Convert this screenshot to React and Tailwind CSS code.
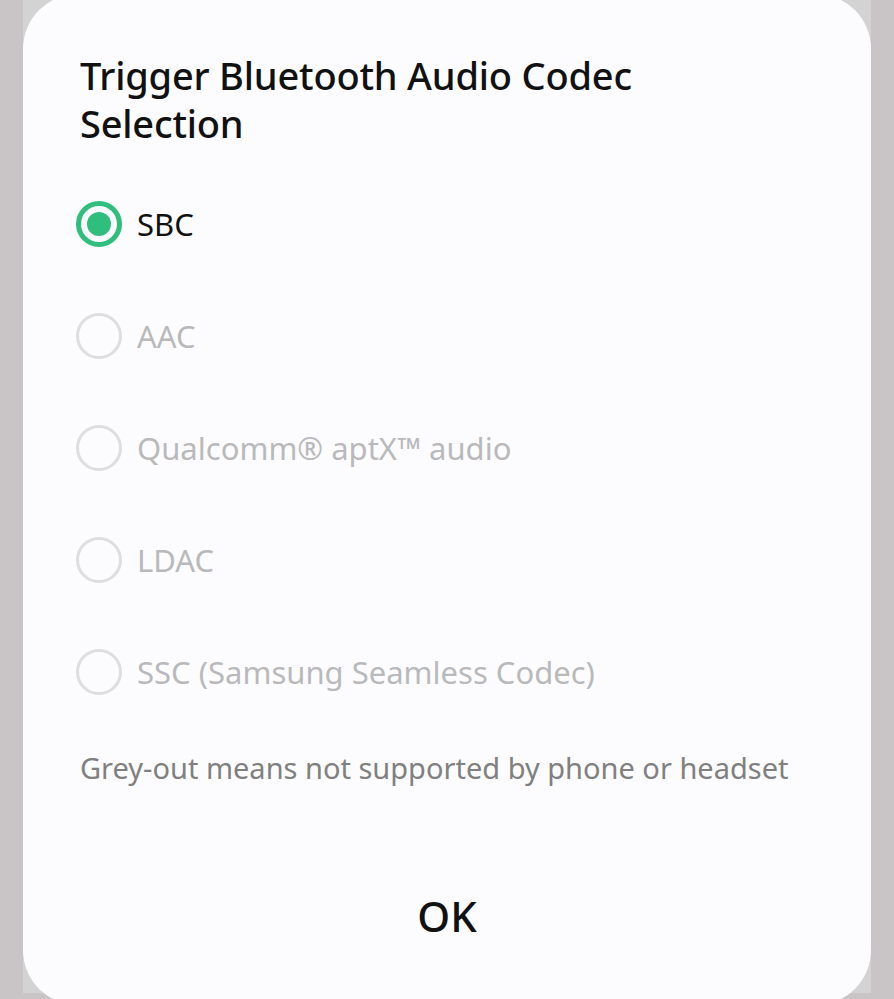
import React from "react";

const options = [
  { label: "SBC", selected: true, enabled: true },
  { label: "AAC", enabled: false },
  { label: "Qualcomm® aptX™ audio", enabled: false },
  { label: "LDAC", enabled: false },
  { label: "SSC (Samsung Seamless Codec)", enabled: false },
];

function Radio({ selected }) {
  if (selected) {
    return (
      <div className="w-[46px] h-[46px] rounded-full border-[5px] border-[#2fbe7c] flex items-center justify-center shrink-0">
        <div className="w-[24px] h-[24px] rounded-full bg-[#2fbe7c]" />
      </div>
    );
  }
  return (
    <div className="w-[46px] h-[46px] rounded-full border-[3px] border-[#dedddf] shrink-0" />
  );
}

export default function App() {
  return (
    <div
      className="w-[894px] h-[999px] bg-[#c9c4c5] overflow-hidden px-[23px]"
      style={{ fontFamily: '"Noto Sans", "Open Sans", sans-serif' }}
    >
      <div className="h-full bg-[#d3d3d3]">
        <div className="-mt-[6px] h-[1011px] rounded-[55px] bg-[#fcfcfe] flex flex-col pl-[57px] pr-[30px] pt-[57px]">
          <h1 className="text-[38px] leading-[48px] font-medium text-[#111111] tracking-[-0.2px]">
            Trigger Bluetooth Audio Codec
            <br />
            Selection
          </h1>
          <div className="mt-[21px] flex flex-col">
            {options.map((o) => (
              <div key={o.label} className="h-[112px] flex items-center">
                <div className="-ml-[4px]">
                  <Radio selected={o.selected} />
                </div>
                <span
                  className={
                    "ml-[15px] text-[31px] leading-[40px] " +
                    (o.enabled ? "text-[#111111]" : "text-[#b9b9bb]")
                  }
                >
                  {o.label}
                </span>
              </div>
            ))}
          </div>
          <p className="mt-[20px] text-[29px] leading-[40px] text-[#808080]">
            Grey-out means not supported by phone or headset
          </p>
          <div className="mt-[103px] flex justify-center -ml-[27px]">
            <span className="text-[42px] leading-[50px] font-medium text-[#111111]">OK</span>
          </div>
        </div>
      </div>
    </div>
  );
}
